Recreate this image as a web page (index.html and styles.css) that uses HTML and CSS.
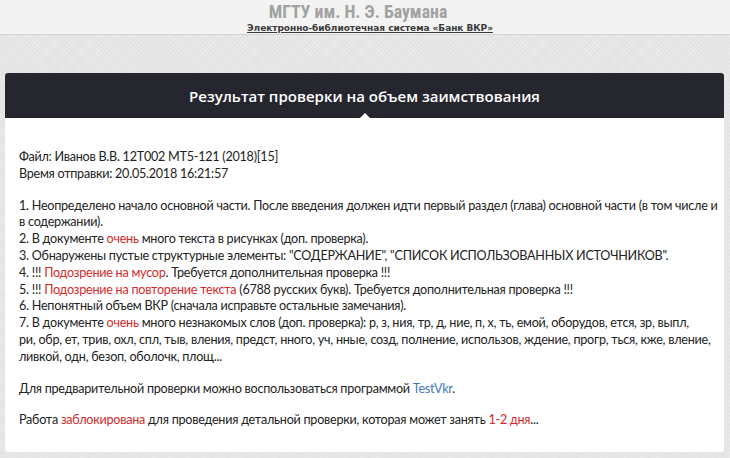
FILE: index.html
```html
<!DOCTYPE html>
<html lang="ru">
<head>
<meta charset="utf-8">
<title>Результат проверки</title>
<link rel="stylesheet" href="styles.css">
</head>
<body>
<header class="site-head">
  <div class="site-title">МГТУ им. Н. Э. Баумана</div>
  <a class="site-sub" href="#">Электронно-библиотечная система «Банк ВКР»</a>
</header>
<main class="card">
  <div class="card-head">
    <h1 class="card-title">Результат проверки на объем заимствования</h1>
    <span class="notch"></span>
  </div>
  <div class="card-body">
    <p>Файл: Иванов В.В. 12Т002 МТ5-121 (2018)[15]<br>Время отправки: 20.05.2018 16:21:57</p>
    <p>1. Неопределено начало основной части. После введения должен идти первый раздел (глава) основной части (в том числе и<br>в содержании).<br>
    2. В документе <span class="red">очень</span> много текста в рисунках (доп. проверка).<br>
    3. Обнаружены пустые структурные элементы: "СОДЕРЖАНИЕ", "СПИСОК ИСПОЛЬЗОВАННЫХ ИСТОЧНИКОВ".<br>
    4. !!! <span class="red">Подозрение на мусор</span>. Требуется дополнительная проверка !!!<br>
    5. !!! <span class="red">Подозрение на повторение текста</span> (6788 русских букв). Требуется дополнительная проверка !!!<br>
    6. Непонятный объем ВКР (сначала исправьте остальные замечания).<br>
    7. В документе <span class="red">очень</span> много незнакомых слов (доп. проверка): р, з, ния, тр, д, ние, п, х, ть, емой, оборудов, ется, зр, выпл,<br>ри, обр, ет, трив, охл, спл, тыв, вления, предст, нного, уч, нные, созд, полнение, использов, ждение, прогр, ться, кже, вление,<br>ливкой, одн, безоп, оболочк, площ...</p>
    <p>Для предварительной проверки можно воспользоваться программой <a class="link" href="#">TestVkr</a>.</p>
    <p>Работа <span class="red">заблокирована</span> для проведения детальной проверки, которая может занять <span class="red">1-2 дня</span>...</p>
  </div>
</main>
</body>
</html>
```

FILE: styles.css
```css
html, body {
  margin: 0;
  padding: 0;
}
body {
  background: #e6e6e6;
  background-image:
    repeating-linear-gradient(45deg, rgba(255,255,255,0.18) 0 1px, transparent 1px 3px),
    repeating-linear-gradient(-45deg, rgba(0,0,0,0.025) 0 1px, transparent 1px 3px);
  min-height: 458px;
  overflow: hidden;
}
.site-head {
  background: #f3f3f3;
  border-bottom: 1px solid #d4d4d4;
  height: 35px;
  display: flex;
  flex-direction: column;
  align-items: center;
  box-sizing: border-box;
}
.site-title {
  font-family: "Liberation Sans Narrow", "Roboto Condensed", "Liberation Sans", sans-serif;
  font-weight: 700;
  font-size: 17.8px;
  line-height: 21px;
  color: #a2a2a2;
  margin: 1px 14px 0 0;
}
.site-sub {
  font-family: "DejaVu Sans", sans-serif;
  font-weight: 700;
  font-size: 9px;
  letter-spacing: -0.05px;
  line-height: 12px;
  color: #3a3a3a;
  text-decoration: underline;
  text-underline-offset: 1px;
  margin-left: 10px;
}
.card {
  display: block;
  margin: 38px 6px 0 5px;
  background: #fff;
  border-radius: 3px;
  overflow: hidden;
}
.card-head {
  position: relative;
  background: #26262e;
  height: 45px;
  display: flex;
  align-items: center;
  justify-content: center;
}
.card-title {
  margin: 0;
  font-family: "Open Sans", sans-serif;
  font-weight: 600;
  font-size: 15px;
  color: #fff;
}
.notch {
  position: absolute;
  left: 50%;
  bottom: 0;
  margin-left: -5px;
  width: 0;
  height: 0;
  border-left: 5px solid transparent;
  border-right: 5px solid transparent;
  border-bottom: 5px solid #fff;
}
.card-body {
  padding: 31px 14px 23px 14px;
  font-family: "Lato", sans-serif;
  font-size: 12.6px;
  letter-spacing: -0.25px;
  line-height: 16.8px;
  color: #222;
}
.card-body p {
  margin: 0 0 15px 0;
  white-space: nowrap;
}
.card-body p:last-child {
  margin-bottom: 0;
}
.red {
  color: #d42a2a;
}
.link {
  color: #3d7bbf;
  text-decoration: none;
}
```
